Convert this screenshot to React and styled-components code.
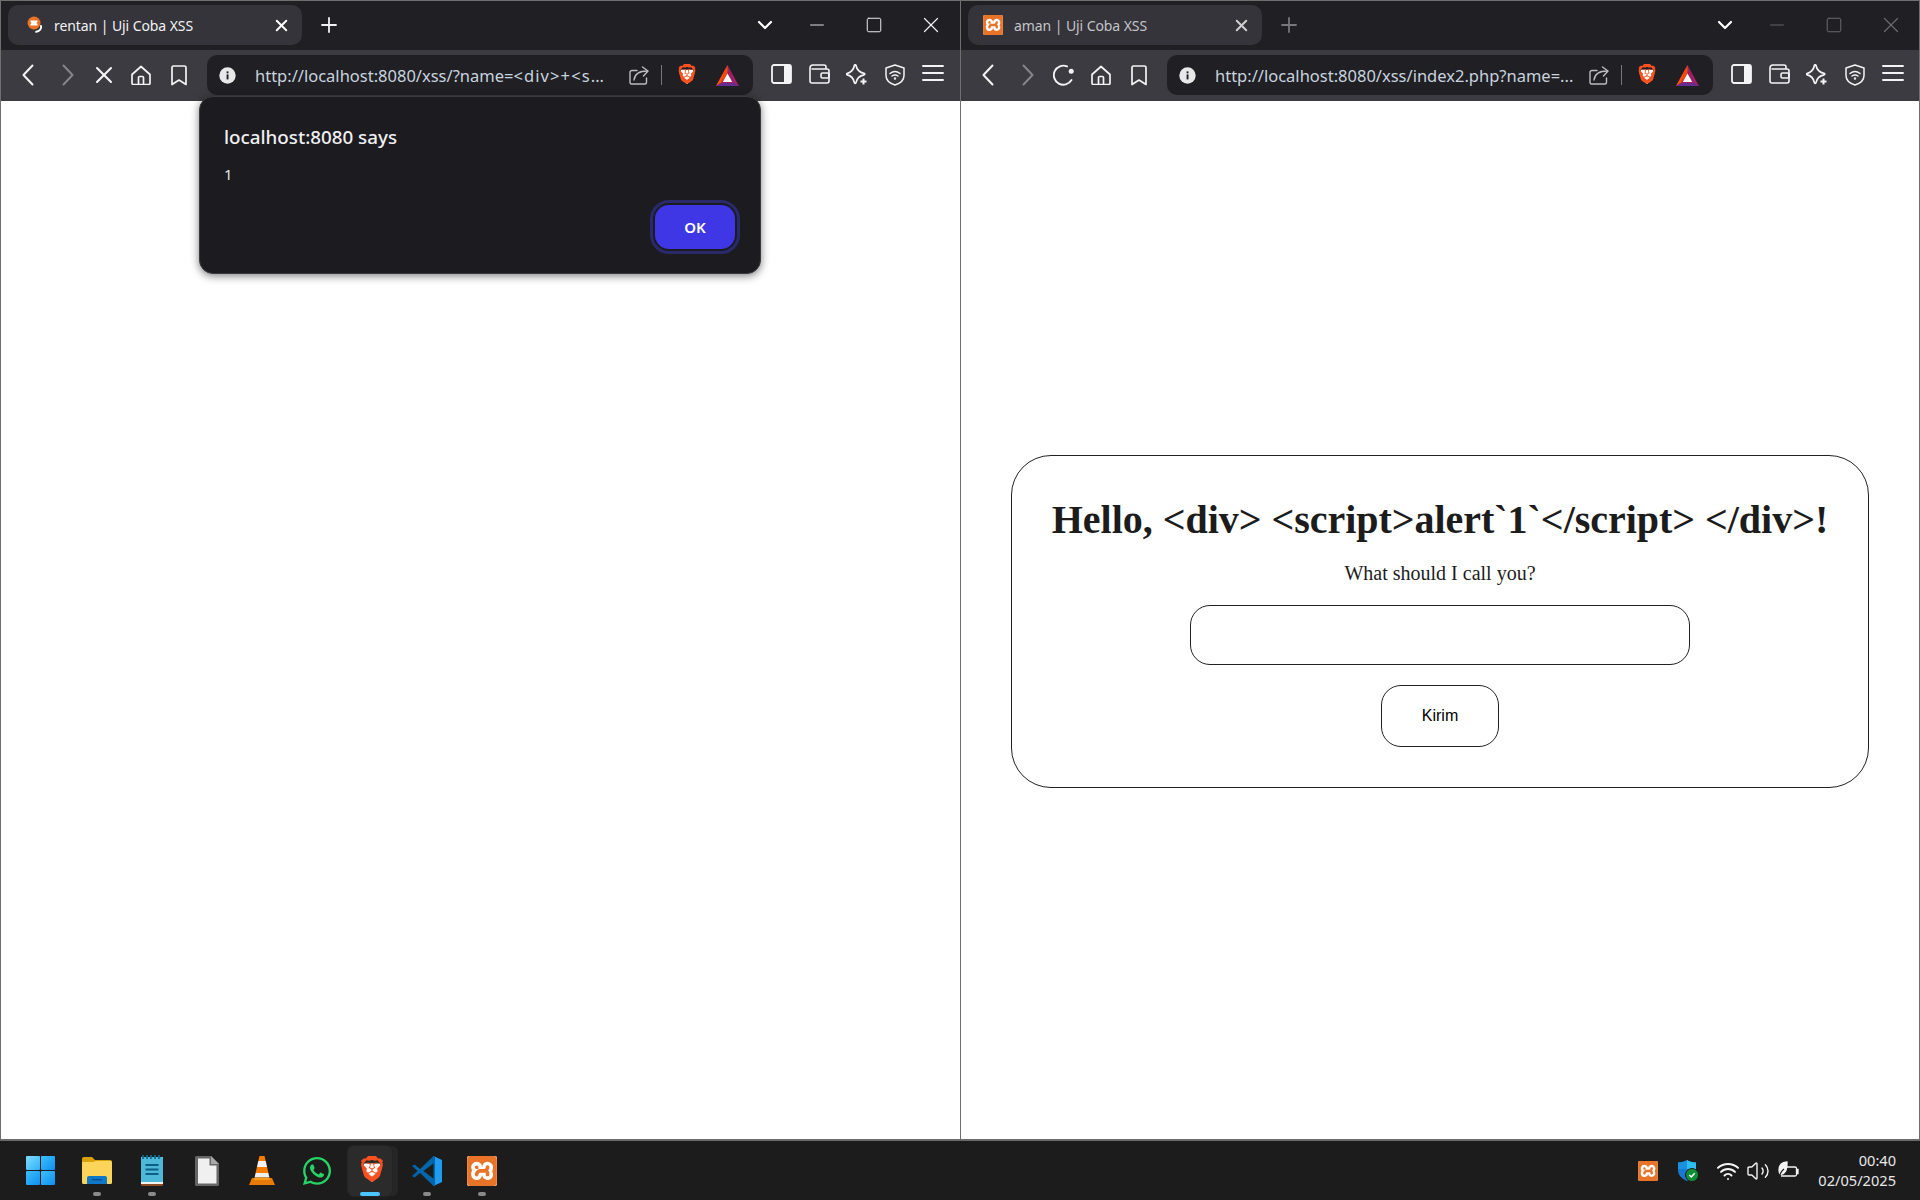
import React from "react";
import styled, { createGlobalStyle } from "styled-components";
import { FaWhatsapp } from "react-icons/fa";
import { SiBrave, SiXampp } from "react-icons/si";
import { ChevronDown, Minus, Plus, Square, Wifi, Volume2, X } from "lucide-react";

const GlobalStyle = createGlobalStyle`
  html, body { margin: 0; padding: 0; background: #fff; }
  body { font-family: "Noto Sans", "Open Sans", sans-serif; }
  * { box-sizing: border-box; }
`;

const Screen = styled.div`
  width: 1920px;
  height: 1200px;
  display: flex;
  flex-direction: column;
  overflow: hidden;
`;
const Windows = styled.div`
  height: 1139px;
  display: grid;
  grid-template-columns: 960px 960px;
`;
const Win = styled.section`
  position: relative;
  display: flex;
  flex-direction: column;
  border-top: 1px solid #6f6f6f;
  border-left: 1px solid #6f6f6f;
  border-right: ${(p) => (p.$last ? "1px solid #6f6f6f" : "0")};
`;
const TabStrip = styled.div`
  height: 49px;
  background: #1f1f24;
  display: flex;
  align-items: center;
  padding: 0 ${(p) => (p.$last ? 0 : 1)}px 1px 7px;
  flex: none;
`;
const Tab = styled.div`
  width: 294px;
  height: 40px;
  border-radius: 10px;
  background: #34343a;
  display: flex;
  align-items: center;
  padding: 0 11px 0 ${(p) => (p.$square ? 15 : 18)}px;
`;
const TabIcon = styled.span`
  width: ${(p) => (p.$square ? 23 : 20)}px;
  display: flex;
  flex: none;
`;
const TabTitle = styled.span`
  margin-left: 8px;
  flex: 1;
  font-size: 14px;
  letter-spacing: -0.08px;
  color: ${(p) => (p.$dim ? "#c4c4c8" : "#f2f2f4")};
  white-space: nowrap;
`;
const TabClose = styled.span`
  display: flex;
  color: ${(p) => (p.$dim ? "#cfcfd2" : "#fff")};
`;
const NewTab = styled.span`
  width: 53px;
  display: flex;
  justify-content: center;
  color: ${(p) => (p.$dim ? "#77777c" : "#f2f2f4")};
`;
const Spring = styled.span`
  flex: 1;
`;
const ListTabs = styled.span`
  width: 46px;
  display: flex;
  justify-content: center;
  color: #fff;
`;
const WinBtn = styled.span`
  width: 57px;
  display: flex;
  justify-content: center;
  color: ${(p) => (p.$dim ? "#6c6c70" : "#f2f2f4")};
`;
const Toolbar = styled.div`
  height: 51px;
  background: #3b3b41;
  display: flex;
  align-items: center;
  padding: 0 0 1px 9px;
  flex: none;
`;
const NavBtn = styled.span`
  width: 37.5px;
  display: flex;
  justify-content: center;
  color: ${(p) => (p.$dim ? "#85858a" : "#f4f4f6")};
`;
const UrlBar = styled.div`
  width: 546px;
  height: 40px;
  margin-left: 9.5px;
  border-radius: 10px;
  background: #1f1f24;
  display: flex;
  align-items: center;
  padding: 0 14px 0 12px;
`;
const UrlText = styled.span`
  margin-left: 19px;
  flex: 1;
  font-size: 16.5px;
  color: #c9d3de;
  white-space: nowrap;
`;
const UrlWide = styled.span`
  letter-spacing: 1.1px;
`;
const UrlIcon = styled.span`
  display: flex;
  color: #bdbdc0;
`;
const UrlDivider = styled.span`
  width: 1px;
  height: 20px;
  background: #77777c;
  margin: 0 15px 0 12px;
`;
const BatSlot = styled.span`
  display: flex;
  margin-left: 19px;
`;
const TrayTools = styled.div`
  display: flex;
  margin-left: 10px;
`;
const ToolBtn = styled.span`
  width: 37.75px;
  display: flex;
  justify-content: center;
  color: #f4f4f6;
`;
const Page = styled.main`
  flex: 1;
  background: #fff;
  display: flex;
  align-items: center;
  justify-content: center;
  padding-top: 2px;
`;
const Card = styled.div`
  padding: 40px;
  border: 1px solid #222;
  border-radius: 40px;
  display: flex;
  flex-direction: column;
  align-items: center;
  font-family: "Liberation Serif", serif;
  color: #1c1c1c;
`;
const Heading = styled.h1`
  margin: 0;
  font-size: 40px;
  line-height: 48px;
  font-weight: 700;
  letter-spacing: -0.03px;
  white-space: nowrap;
`;
const Prompt = styled.p`
  margin: 18px 0 0;
  font-size: 20px;
  line-height: 23px;
`;
const NameInput = styled.input`
  width: 500px;
  height: 60px;
  margin-top: 20px;
  border: 1px solid #222;
  border-radius: 20px;
  background: #fff;
`;
const Submit = styled.button`
  width: 118px;
  height: 62px;
  margin-top: 20px;
  border: 1px solid #222;
  border-radius: 20px;
  background: #fff;
  color: #000;
  font: 16px "Liberation Sans", sans-serif;
`;
const Dialog = styled.div`
  position: absolute;
  left: 198px;
  top: 95px;
  width: 562px;
  height: 178px;
  background: #1b1b20;
  border-radius: 14px;
  border: 1px solid #3a3a40;
  box-shadow: 0 2px 8px rgba(0, 0, 0, 0.5);
  padding: 27px 24px 0;
  z-index: 2;
`;
const DialogTitle = styled.div`
  font-size: 18.8px;
  line-height: 26px;
  font-weight: 500;
  color: #f0f0f2;
`;
const DialogBody = styled.div`
  margin-top: 14px;
  font-size: 15px;
  line-height: 20px;
  color: #e4e4e6;
`;
const DialogActions = styled.div`
  display: flex;
  justify-content: flex-end;
  margin-top: 21px;
`;
const OkButton = styled.button`
  width: 80px;
  height: 44px;
  margin-right: 1px;
  border: 0;
  border-radius: 14px;
  background: #3f37e6;
  color: #fff;
  font: 600 15px "Noto Sans", sans-serif;
  outline: 3px solid #2a2a6b;
  outline-offset: 2px;
`;
const Taskbar = styled.footer`
  height: 61px;
  border-top: 2px solid #6b6b6b;
  background: #1c1c1c;
  display: flex;
  align-items: center;
  padding: 0 24px 0 12.5px;
`;
const Pinned = styled.div`
  display: flex;
  align-items: center;
`;
const Pin = styled.div`
  position: relative;
  width: 55px;
  height: 50px;
  display: flex;
  align-items: center;
  justify-content: center;
  ${(p) => p.$start && "margin-right: 2px;"}
  ${(p) => p.$active && `
    &::before {
      content: "";
      position: absolute;
      left: 5px; top: 0; width: 48px; height: 50px;
      border-radius: 6px;
      background: #262626;
    }
    &::after {
      content: "";
      position: absolute;
      left: 3px; top: 0; width: 44px; height: 50px;
      border-radius: 6px;
      background: #2b2b2b;
      box-shadow: 0 0 0 1px #242424;
    }
  `}
  > * { position: relative; z-index: 1; }
`;
const RunDot = styled.span`
  position: absolute !important;
  left: 50%;
  bottom: 0;
  width: ${(p) => (p.$active ? 20 : 8)}px;
  height: 4px;
  margin-left: ${(p) => (p.$active ? -12 : -4)}px;
  border-radius: 2px;
  z-index: 2 !important;
  background: ${(p) => (p.$active ? "#4cc2ff" : "#8a8a8a")};
`;
const Tray = styled.div`
  display: flex;
  align-items: center;
  color: #f4f4f4;
`;
const TraySlot = styled.span`
  width: ${(p) => p.$w}px;
  display: flex;
  justify-content: center;
`;
const Clock = styled.div`
  width: 93px;
  margin-top: -2px;
  text-align: right;
  font-size: 14.6px;
  line-height: 20px;
  color: #e8e8e8;
`;
const LogoTile = styled.span`
  display: flex;
  border-radius: 2px;
  background: #fff;
  color: #e8742a;
`;

const Xampp = ({ size }) => (
  <LogoTile><SiXampp size={size} /></LogoTile>
);

const BraveLogo = ({ size }) => (
  <svg width={size} height={size * 1.12} viewBox="0 0 24 27">
    <path d="M5 7h14l2 4-3 8-6 5-6-5-3-8z" fill="#fff" />
    <foreignObject width="24" height="27">
      <SiBrave size={24} color="#f9501f" />
    </foreignObject>
  </svg>
);

const BatLogo = () => (
  <svg width="23" height="21" viewBox="0 0 23 21">
    <path d="M11.5 0L0 21h23z" fill="#9e1f63" />
    <path d="M11.5 0L0 21l5-3z" fill="#ff5000" />
    <path d="M0 21h23l-5-3H5z" fill="#662d91" />
    <path d="M11.5 0v9L5 18z" fill="#ff5000" opacity="0.9" />
    <path d="M11.5 8.5L6.8 17h9.4z" fill="#fff" />
  </svg>
);

const Favicon = () => (
  <svg width="20" height="20" viewBox="0 0 20 20">
    <circle cx="8" cy="8" r="6.5" fill="#e8742a" />
    <path d="M4.5 5.5h7v1.5l-1.2 1 1.2 1v1.5h-7V9l1.2-1L4.5 7z" fill="#fff" />
    <path d="M15 11c1 3-2 5.5-4.8 5.8" stroke="#fff" strokeWidth="2" fill="none" strokeLinecap="round" />
  </svg>
);

const InfoDot = () => (
  <svg width="17" height="17" viewBox="0 0 17 17">
    <circle cx="8.5" cy="8.5" r="8.2" fill="#e8e8ea" />
    <rect x="7.6" y="7.4" width="1.9" height="5" fill="#1f1f24" />
    <rect x="7.6" y="4.4" width="1.9" height="1.9" fill="#1f1f24" />
  </svg>
);

const Stroke = ({ w = 20, h = 20, sw = 1.7, children }) => (
  <svg width={w} height={h} viewBox={`0 0 ${w} ${h}`} fill="none" stroke="currentColor" strokeWidth={sw} strokeLinecap="round" strokeLinejoin="round">
    {children}
  </svg>
);

const BackIcon = () => (
  <Stroke w={13} h={22} sw={2}>
    <path d="M10.5 1.5L1.5 11l9 9.500" />
  </Stroke>
);
const ForwardIcon = () => (
  <Stroke w={15} h={22} sw={2}>
    <path d="M4.500 1.500l9 9.500-9 9.500" />
  </Stroke>
);
const HomeIcon = () => (
  <Stroke>
    <path d="M1 9.5L10 1.5l9 8v8.5a1.5 1.5 0 0 1-1.5 1.5h-15A1.5 1.5 0 0 1 1 18z" />
    <path d="M7.5 19v-6.5a1 1 0 0 1 1-1h3a1 1 0 0 1 1 1V19" />
  </Stroke>
);
const BookmarkIcon = () => (
  <Stroke w={16} h={21}>
    <path d="M2.5 1h11a1.5 1.5 0 0 1 1.5 1.5V19.5L8 15 1 19.5V2.5A1.5 1.5 0 0 1 2.5 1z" />
  </Stroke>
);
const ReloadIcon = () => (
  <svg width="22" height="22" viewBox="0 0 22 22" fill="none">
    <path d="M18.5 16A9.5 9.5 0 1 1 14 2.4" stroke="currentColor" strokeWidth="1.9" strokeLinecap="round" />
    <circle cx="18.2" cy="7.2" r="2.5" fill="currentColor" />
  </svg>
);
const ShareIcon = () => (
  <Stroke w={20} h={19} sw={1.4}>
    <path d="M8 4.500H3a2 2 0 0 0-2 2v10a1.500 1.500 0 0 0 1.500 1.500H16a1.500 1.500 0 0 0 1.500-1.500V12" />
    <path d="M5 14c.500-5 4.500-9 13.500-9" />
    <path d="M13.500 1l5.500 4-4.500 5" />
  </Stroke>
);
const SidebarIcon = () => (
  <svg width="21" height="20" viewBox="0 0 21 20">
    <rect x="1" y="1" width="19" height="18" rx="2" fill="none" stroke="currentColor" strokeWidth="1.8" />
    <rect x="13" y="1" width="7" height="18" rx="1.500" fill="currentColor" />
  </svg>
);
const WalletIcon = () => (
  <Stroke w={21} h={20} sw={1.6}>
    <path d="M17 5V3a2 2 0 0 0-2-2H4C2.300 1 1 2.300 1 4v13a2 2 0 0 0 2 2h15a2 2 0 0 0 2-2V7a2 2 0 0 0-2-2H3" />
    <rect x="12" y="9" width="8" height="5" rx="1.500" />
  </Stroke>
);
const LeoIcon = () => (
  <svg width="22" height="22" viewBox="0 0 22 22" fill="none" stroke="currentColor" strokeLinejoin="round">
    <path strokeWidth="1.700" d="M10 1.500c1 4.600 3 6.800 8 7.800 1 .2 1 1.400 0 1.600-5 1-7 3.100-8 7.700-.2 1-1.400 1-1.600 0-1-4.600-2.900-6.700-7-7.700-1-.2-1-1.400 0-1.600 4.100-1 6-3.200 7-7.800.2-1 1.400-1 1.600 0z" />
    <path strokeWidth="2" d="M17.500 14.500v6M14.500 17.500h6" />
  </svg>
);
const VpnIcon = () => (
  <Stroke w={20} h={22} sw={1.500}>
    <path d="M10 1l9 3v7.500c0 4.500-3.500 7.800-9 9.500-5.500-1.700-9-5-9-9.500V4z" />
    <path d="M5 9.500c3-2.500 7-2.500 10 0M7 12c2-1.400 4-1.400 6 0" />
    <circle cx="10" cy="14.500" r="0.500" />
  </Stroke>
);
const MenuIcon = () => (
  <Stroke w={22} h={18} sw={1.9}>
    <path d="M1 2h20M1 9h20M1 16h20" />
  </Stroke>
);

const Win11Logo = () => (
  <svg width="29" height="29" viewBox="0 0 29 29">
    <defs>
      <linearGradient id="winA" x1="0" y1="0" x2="1" y2="1">
        <stop offset="0" stopColor="#7fdcff" />
        <stop offset="1" stopColor="#2fb2f5" />
      </linearGradient>
      <linearGradient id="winB" x1="0" y1="0" x2="1" y2="1">
        <stop offset="0" stopColor="#3cc0fb" />
        <stop offset="1" stopColor="#0f8ff0" />
      </linearGradient>
    </defs>
    <rect width="14" height="14" rx="1" fill="url(#winA)" />
    <rect x="15" width="14" height="14" rx="1" fill="url(#winB)" />
    <rect y="15" width="14" height="14" rx="1" fill="url(#winB)" />
    <rect x="15" y="15" width="14" height="14" rx="1" fill="url(#winB)" />
  </svg>
);
const ExplorerIcon = () => (
  <svg width="30" height="27" viewBox="0 0 30 27">
    <path d="M0 2a2 2 0 0 1 2-2h8l3 3h15a2 2 0 0 1 2 2v3H0z" fill="#d9a308" />
    <path d="M0 5h11l3-1h14.500A1.500 1.500 0 0 1 30 5.500V25.500A1.500 1.500 0 0 1 28.500 27h-27A1.500 1.500 0 0 1 0 25.500z" fill="#fcd45a" />
    <path d="M5 21a2 2 0 0 1 2-2h16a2 2 0 0 1 2 2v6H5z" fill="#0f78c8" />
    <rect x="10" y="22" width="10" height="1.400" fill="#0a4f8f" />
  </svg>
);
const NotepadIcon = () => (
  <svg width="23" height="31" viewBox="0 0 23 31">
    <rect y="2" width="22" height="29" rx="1.500" fill="#8a4a24" />
    <rect y="2" width="22" height="27" fill="#f2f2f2" />
    <rect y="2" width="22" height="25" rx="1" fill="#4db8d8" />
    <path d="M2 0v4M6 0v4M10 0v4M14 0v4M18 0v4" stroke="#0f6c8c" strokeWidth="1.800" />
    <path d="M4.500 10h13M4.500 14.500h13M4.500 19h13" stroke="#0c5f83" strokeWidth="1.800" />
  </svg>
);
const DocIcon = () => (
  <svg width="24" height="30" viewBox="0 0 24 30">
    <path d="M1.500 0H16l8 8v20.500a1.500 1.500 0 0 1-1.500 1.500h-21A1.500 1.500 0 0 1 0 28.500V1.500A1.500 1.500 0 0 1 1.500 0z" fill="#666" />
    <path d="M3 2.500h11.500V9.500h7V27.500H3z" fill="#f0f0f0" />
    <path d="M16 0l8 8h-8z" fill="#a8a8a8" />
  </svg>
);
const VlcIcon = () => (
  <svg width="26" height="29" viewBox="0 0 26 29">
    <path d="M10.500 0h5l1.200 5h-7.400z" fill="#f57c00" />
    <path d="M9.300 5h7.400l1.400 6H7.900z" fill="#f2f2f2" />
    <path d="M7.900 11h10.200l1.300 6H6.600z" fill="#f57c00" />
    <path d="M6.600 17h12.800l1 4.500H5.600z" fill="#eee" />
    <path d="M3 22h20l3 7H0z" fill="#e87b08" />
    <path d="M5.600 21.500h14.800l.6 2.500H5z" fill="#f79a1c" />
  </svg>
);
const VscodeIcon = () => (
  <svg width="30" height="30" viewBox="0 0 30 30">
    <path d="M21.500 0L30 4v22l-8.500 4z" fill="#1f9cf0" />
    <path d="M21.500 0L8 13 2.500 8.500 0 10l5.500 5L0 20l2.500 1.500L8 17l13.500 13 1.500-1V1z" fill="#0065a9" />
    <path d="M21.500 7.500L11.500 15l10 7.500z" fill="#1c1c1c" />
  </svg>
);
const DefenderIcon = () => (
  <svg width="20" height="21" viewBox="0 0 20 21" style={{ overflow: "visible" }}>
    <path d="M9 0c2 1.500 5 2.500 9 2.500V10c0 5-3.500 8.500-9 11-5.500-2.500-9-6-9-11V2.500C4 2.500 7 1.500 9 0z" fill="#1a78d2" />
    <path d="M9 0c2 1.500 5 2.500 9 2.500V9H9z" fill="#2dbdf2" />
    <path d="M0 2.500C4 2.500 7 1.500 9 0v9H0z" fill="#1c90dd" />
    <circle cx="14" cy="15" r="6.500" fill="#0d8f37" stroke="#1c1c1c" strokeWidth="1" />
    <path d="M11.300 15l2 2 3.400-3.800" stroke="#fff" strokeWidth="1.400" fill="none" />
  </svg>
);
const BatteryLeaf = () => (
  <svg width="21" height="20" viewBox="0 0 21 20" fill="none" stroke="currentColor" strokeWidth="1.300">
    <path d="M8 6h9a1.500 1.500 0 0 1 1.500 1.500v6A1.500 1.500 0 0 1 17 15H3" />
    <path d="M18.500 8.500h1.500v4h-1.500" fill="currentColor" />
    <path d="M9 1C4 1.500 1 4.500 1 9c0 2 .5 3.500 1.500 4.500C7 13 9.500 9 9 1z" fill="currentColor" />
    <path d="M1 17c1-5 3-7.500 5-9" stroke="#1c1c1c" />
  </svg>
);

const BrowserWindow = ({ title, url, favicon, reload, dim, last, square, children }) => (
  <Win $last={last}>
    <TabStrip $last={last}>
      <Tab $square={square}>
        <TabIcon $square={square}>{favicon}</TabIcon>
        <TabTitle $dim={dim} $square={square}>{title}</TabTitle>
        <TabClose $dim={dim}><X size={19} strokeWidth={2.500} /></TabClose>
      </Tab>
      <NewTab $dim={dim}><Plus size={24} strokeWidth={1.800} /></NewTab>
      <Spring />
      <ListTabs><ChevronDown size={24} strokeWidth={2.200} /></ListTabs>
      <WinBtn $dim={dim}><Minus size={22} strokeWidth={1} /></WinBtn>
      <WinBtn $dim={dim}><Square size={18} strokeWidth={1.300} /></WinBtn>
      <WinBtn $dim={dim}><X size={26} strokeWidth={1.100} /></WinBtn>
    </TabStrip>
    <Toolbar>
      <NavBtn><BackIcon /></NavBtn>
      <NavBtn $dim><ForwardIcon /></NavBtn>
      <NavBtn>{reload ? <ReloadIcon /> : <X size={28} strokeWidth={1.800} />}</NavBtn>
      <NavBtn><HomeIcon /></NavBtn>
      <NavBtn><BookmarkIcon /></NavBtn>
      <UrlBar>
        <InfoDot />
        <UrlText>{url}</UrlText>
        <UrlIcon><ShareIcon /></UrlIcon>
        <UrlDivider />
        <BraveLogo size={20} />
        <BatSlot><BatLogo /></BatSlot>
      </UrlBar>
      <TrayTools>
        <ToolBtn><SidebarIcon /></ToolBtn>
        <ToolBtn><WalletIcon /></ToolBtn>
        <ToolBtn><LeoIcon /></ToolBtn>
        <ToolBtn><VpnIcon /></ToolBtn>
        <ToolBtn><MenuIcon /></ToolBtn>
      </TrayTools>
    </Toolbar>
    {children}
  </Win>
);

export default function App() {
  return (
    <Screen>
      <GlobalStyle />
      <Windows>
        <BrowserWindow
          title="rentan | Uji Coba XSS"
          url={<>http://localhost:8080/xss/?name=<UrlWide>{"<div>+<s"}</UrlWide>...</>}
          favicon={<Favicon />}
        >
          <Page />
          <Dialog>
            <DialogTitle>localhost:8080 says</DialogTitle>
            <DialogBody>1</DialogBody>
            <DialogActions><OkButton>OK</OkButton></DialogActions>
          </Dialog>
        </BrowserWindow>
        <BrowserWindow last dim square reload title="aman | Uji Coba XSS" url="http://localhost:8080/xss/index2.php?name=..." favicon={<Xampp size={20} />}>
          <Page>
            <Card>
              <Heading>{"Hello, <div> <script>alert`1`</script> </div>!"}</Heading>
              <Prompt>What should I call you?</Prompt>
              <NameInput />
              <Submit>Kirim</Submit>
            </Card>
          </Page>
        </BrowserWindow>
      </Windows>
      <Taskbar>
        <Pinned>
          <Pin $start><Win11Logo /></Pin>
          <Pin><ExplorerIcon /><RunDot /></Pin>
          <Pin><NotepadIcon /><RunDot /></Pin>
          <Pin><DocIcon /></Pin>
          <Pin><VlcIcon /></Pin>
          <Pin><FaWhatsapp size={32} color="#25d366" /></Pin>
          <Pin $active><BraveLogo size={26} /><RunDot $active /></Pin>
          <Pin><VscodeIcon /><RunDot /></Pin>
          <Pin><Xampp size={30} /><RunDot /></Pin>
        </Pinned>
        <Spring />
        <Tray>
          <TraySlot $w={30}><Xampp size={20} /></TraySlot>
          <TraySlot $w={50}><DefenderIcon /></TraySlot>
          <TraySlot $w={30}><Wifi size={24} strokeWidth={2} /></TraySlot>
          <TraySlot $w={30}><Volume2 size={24} strokeWidth={1.400} /></TraySlot>
          <TraySlot $w={30}><BatteryLeaf /></TraySlot>
          <Clock>00:40<br />02/05/2025</Clock>
        </Tray>
      </Taskbar>
    </Screen>
  );
}
